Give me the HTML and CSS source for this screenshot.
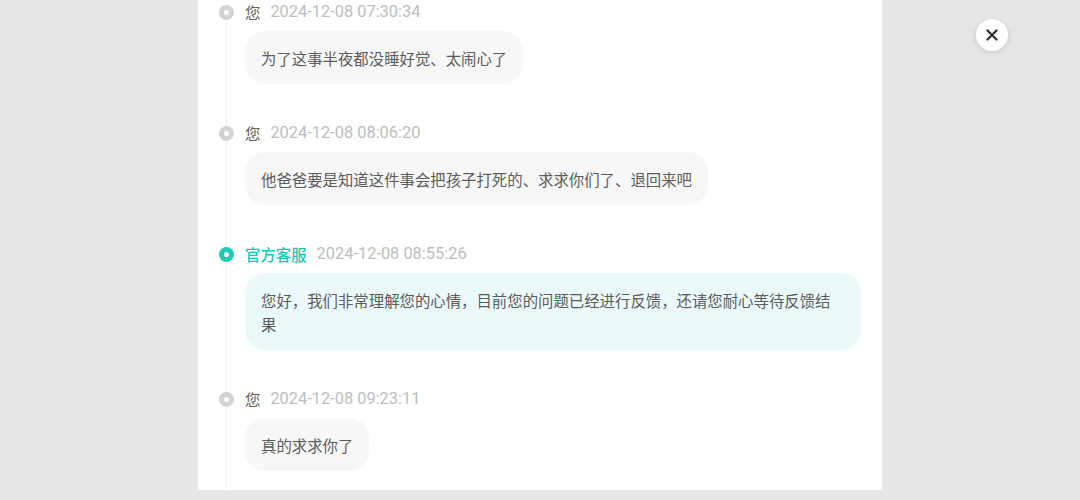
FILE: index.html
```html
<!DOCTYPE html>
<html lang="zh-CN">
<head>
<meta charset="utf-8">
<link rel="stylesheet" href="styles.css">
</head>
<body>
<div class="page">
  <div class="panel">
    <div class="timeline">
      <div class="item">
        <span class="dot"></span>
        <div class="body">
          <div class="head"><span class="name">您</span><span class="time">2024-12-08 07:30:34</span></div>
          <div class="bubble">为了这事半夜都没睡好觉、太闹心了</div>
        </div>
      </div>
      <div class="item">
        <span class="dot"></span>
        <div class="body">
          <div class="head"><span class="name">您</span><span class="time">2024-12-08 08:06:20</span></div>
          <div class="bubble">他爸爸要是知道这件事会把孩子打死的、求求你们了、退回来吧</div>
        </div>
      </div>
      <div class="item official">
        <span class="dot"></span>
        <div class="body">
          <div class="head"><span class="name">官方客服</span><span class="time">2024-12-08 08:55:26</span></div>
          <div class="bubble">您好，我们非常理解您的心情，目前您的问题已经进行反馈，还请您耐心等待反馈结果</div>
        </div>
      </div>
      <div class="item">
        <span class="dot"></span>
        <div class="body">
          <div class="head"><span class="name">您</span><span class="time">2024-12-08 09:23:11</span></div>
          <div class="bubble">真的求求你了</div>
        </div>
      </div>
    </div>
  </div>
</div>
<button class="close" aria-label="关闭">
  <svg width="14" height="14" viewBox="0 0 14 14"><path d="M2.5 2.5 L11.5 11.5 M11.5 2.5 L2.5 11.5" stroke="#333" stroke-width="2.4" stroke-linecap="round"/></svg>
</button>
</body>
</html>
```
FILE: styles.css
```css
html, body {
  margin: 0;
  padding: 0;
  background: #e6e6e6;
  height: 500px;
  overflow: hidden;
}
body {
  font-family: "Noto Sans CJK SC", "Noto Sans", sans-serif;
}
.page {
  display: flex;
  padding-left: 198px;
}
.panel {
  width: 684px;
  height: 490px;
  background: #fff;
  box-sizing: border-box;
  padding: 1px 21px 0 21px;
  overflow: hidden;
}
.timeline {
  position: relative;
}
.timeline::before {
  content: "";
  position: absolute;
  left: 7px;
  top: 10px;
  bottom: -600px;
  width: 1px;
  background: #efefef;
}
.item {
  display: flex;
  gap: 11px;
  margin-bottom: 38px;
  position: relative;
}
.dot {
  flex: none;
  width: 15px;
  height: 15px;
  margin-top: 4px;
  border-radius: 50%;
  background: #d3d3d3;
  display: flex;
  align-items: center;
  justify-content: center;
}
.dot::after {
  content: "";
  width: 5px;
  height: 5px;
  border-radius: 50%;
  background: #fff;
}
.official .dot {
  background: #1ccab6;
}
.body {
  flex: 1;
  min-width: 0;
  display: flex;
  flex-direction: column;
  align-items: flex-start;
}
.head {
  display: flex;
  align-items: center;
  gap: 10px;
  height: 22px;
  line-height: 22px;
  font-size: 15.4px;
}
.name {
  color: #5e5e5e;
}
.official .name {
  color: #1cc6b2;
  font-weight: 500;
}
.time {
  color: #bdbdbd;
  font-family: Roboto, "Noto Sans", sans-serif;
  font-size: 16.4px;
  line-height: 22px;
}
.bubble {
  margin-top: 8px;
  background: #f7f7f7;
  color: #5c5c5c;
  font-size: 15.4px;
  line-height: 24px;
  padding: 14.5px 16px;
  border-radius: 20px;
  box-sizing: border-box;
}
.official .bubble {
  background: #ebf9fa;
  width: 100%;
}
.close {
  position: fixed;
  top: 19px;
  left: 976px;
  width: 32px;
  height: 32px;
  border: none;
  border-radius: 50%;
  background: #fff;
  box-shadow: 0 2px 6px rgba(0,0,0,0.12);
  display: flex;
  align-items: center;
  justify-content: center;
  padding: 0;
}
```
